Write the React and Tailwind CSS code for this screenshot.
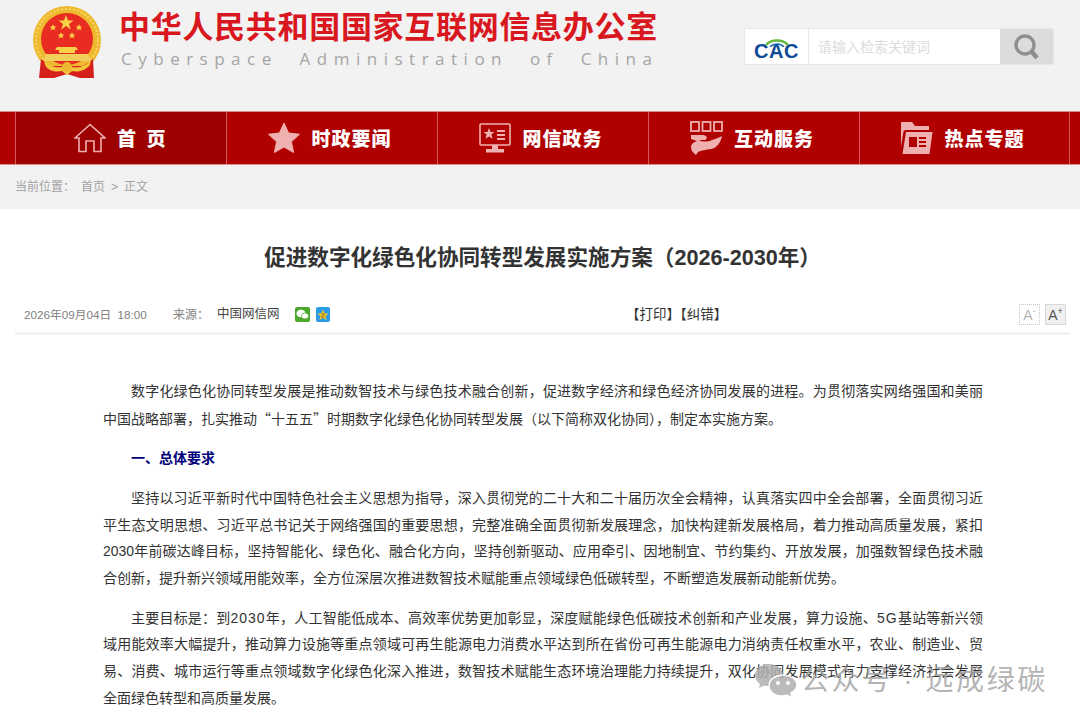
const sans = "font-['Liberation_Sans','Noto_Sans_CJK_SC',sans-serif]"

function Emblem() {
  return (
    <svg width="72" height="76" viewBox="0 0 72 76" className="shrink-0">
      <circle cx="35" cy="34" r="34" fill="#eeb92e" />
      <circle cx="35" cy="34" r="31" fill="none" stroke="#f8d763" strokeWidth="2" strokeDasharray="2 2" />
      <circle cx="35" cy="33" r="26" fill="#e92c22" />
      <polygon points="34,9 36,14.5 41.5,14.5 37,18 38.7,23.5 34,20 29.3,23.5 31,18 26.5,14.5 32,14.5" fill="#f7d34a" />
      <polygon points="21,18 22,20.5 24.5,20.5 22.5,22 23.3,24.5 21,23 18.7,24.5 19.5,22 17.5,20.5 20,20.5" fill="#f7d34a" />
      <polygon points="47,18 48,20.5 50.5,20.5 48.5,22 49.3,24.5 47,23 44.7,24.5 45.5,22 43.5,20.5 46,20.5" fill="#f7d34a" />
      <polygon points="29,26 30,28.5 32.5,28.5 30.5,30 31.3,32.5 29,31 26.7,32.5 27.5,30 25.5,28.5 28,28.5" fill="#f7d34a" />
      <polygon points="40,26 41,28.5 43.5,28.5 41.5,30 42.3,32.5 40,31 37.7,32.5 38.5,30 36.5,28.5 39,28.5" fill="#f7d34a" />
      <path d="M25 41 L44 41 L46 44 L43 44 L43 47 L27 47 L27 44 L23 44 Z" fill="#f7d34a" />
      <path d="M14 48 L56 48 L59 55 L11 55 Z" fill="#f1cf5b" />
      <path d="M9 53 L19 60 L51 60 L61 53 L62 72 L48 72 L35 68 L22 72 L7 72 Z" fill="#d6201c" />
      <path d="M12 53 C 18 63 28 62 35 60 C 43 62 53 63 59 53 L 58 59 C 52 66 44 66 40 65 L 35 69 L 30 65 C 25 66 17 66 13 59 Z" fill="#f2c53a" />
      <circle cx="35" cy="61" r="5" fill="#eeb92e" />
    </svg>
  )
}

function CacLogo() {
  return (
    <div className="relative w-[64px] h-full flex items-end justify-center pb-[2px] border-r border-[#e6e6e6] bg-white shrink-0">
      <svg width="26" height="9" viewBox="0 0 26 9" className="absolute left-[19px] top-[9px]">
        <path d="M2 7 C 7 1 19 1 24 7" fill="none" stroke="#63b93f" strokeWidth="2.4" />
        <path d="M6 9 C 10 5 16 5 20 9" fill="none" stroke="#1b6db3" strokeWidth="1.6" />
      </svg>
      <span className="font-['Liberation_Sans',sans-serif] font-bold text-[20px] leading-[22px] tracking-[0.5px] text-[#0f4a96]">CAC</span>
    </div>
  )
}

function Header() {
  return (
    <header className="h-[111px] bg-[#f2f2f2] flex items-start">
      <div className="pl-[32px] pt-[6px] pr-[15px]"><Emblem /></div>
      <div className="w-[540px] pt-[10px]">
        <div className={`${sans} font-bold text-[31px] leading-[36px] tracking-[0.7px] text-[#d9171e] whitespace-nowrap`}>中华人民共和国国家互联网信息办公室</div>
        <div className="font-['Open_Sans',sans-serif] text-[17px] leading-[24px] tracking-[6.5px] ml-[2px] mt-[1px] text-[#a5a5a5] whitespace-pre">Cyberspace  Administration  of  China</div>
      </div>
      <div className="ml-[85px] mt-[28px] w-[310px] h-[37px] flex rounded-[2px] border border-[#e6e6e6] bg-white overflow-hidden">
        <CacLogo />
        <div className={`${sans} flex-1 pl-[9px] text-[14px] leading-[37px] text-[#dcdcdc]`}>请输入检索关键词</div>
        <div className="w-[53px] bg-[#dcdcdc] flex items-center justify-center">
          <svg width="30" height="28" viewBox="0 0 30 28">
            <circle cx="13" cy="12" r="9" fill="none" stroke="#8f8f8f" strokeWidth="3.4" />
            <path d="M20 19 L25 25" stroke="#8f8f8f" strokeWidth="4.5" />
          </svg>
        </div>
      </div>
    </header>
  )
}

const pink = '#efb0b0'

function HomeIcon() {
  return (
    <svg width="32" height="30" viewBox="0 0 32 30" fill="none" stroke={pink} strokeWidth="1.6">
      <path d="M1 15 L16 1.5 L31 15 L27 15 L27 28.5 L20 28.5 L20 18 L12 18 L12 28.5 L5 28.5 L5 15 Z" />
    </svg>
  )
}

function StarIcon() {
  return (
    <svg width="32" height="32" viewBox="0 0 32 32" fill={pink}>
      <path d="M16 1 L20.6 11 L31.5 12.3 L23.4 19.7 L25.6 30.5 L16 25 L6.4 30.5 L8.6 19.7 L0.5 12.3 L11.4 11 Z" stroke={pink} strokeLinejoin="round" />
    </svg>
  )
}

function MonitorIcon() {
  return (
    <svg width="32" height="30" viewBox="0 0 32 30">
      <rect x="1" y="1" width="30" height="21" rx="1" fill="none" stroke={pink} strokeWidth="1.6" />
      <polygon points="10,5 11.6,9 15.5,9 12.4,11.6 13.6,15.8 10,13.4 6.4,15.8 7.6,11.6 4.5,9 8.4,9" fill={pink} />
      <path d="M18 8 H26 M18 12 H26 M18 16 H26" stroke={pink} strokeWidth="1.8" />
      <path d="M13 22 H19 V26 H25 V29.5 H7 V26 H13 Z" fill={pink} />
    </svg>
  )
}

function HandIcon() {
  return (
    <svg width="33" height="34" viewBox="0 0 33 34">
      <g fill="none" stroke={pink} strokeWidth="1.8">
        <rect x="1" y="1" width="8" height="9" />
        <rect x="12.5" y="1" width="8" height="9" />
        <rect x="24" y="1" width="8" height="9" />
      </g>
      <path d="M1 14 H13 C 17 14 18 18 15 19 H9 C 12 21 18 21 22 19 C 26 18 30 16 32 15 C 31 21 27 27 21 28 C 16 29 12 29 8 31 L6 34 C 3 32 1 29 1 26 C 1 23 4 21 7 20 L1 18 Z" fill={pink} />
    </svg>
  )
}

function FolderIcon() {
  return (
    <svg width="33" height="34" viewBox="0 0 33 34" fill={pink}>
      <path d="M1 1 H12 L15 5 H29 V9 H6 C 4 9 3.4 10 3.2 12 L1 26 Z" />
      <path d="M6 11 H32.5 L29.5 33 H2.5 Z" />
      <rect x="9" y="16" width="8" height="10" fill="#b00000" />
      <path d="M19 17 H26 M19 21 H26 M19 25 H26" stroke="#b00000" strokeWidth="2" />
    </svg>
  )
}

const navItems = [
  { label: '首 页', icon: <HomeIcon />, active: true },
  { label: '时政要闻', icon: <StarIcon /> },
  { label: '网信政务', icon: <MonitorIcon /> },
  { label: '互动服务', icon: <HandIcon /> },
  { label: '热点专题', icon: <FolderIcon /> },
]

function Nav() {
  return (
    <nav className="h-[54px] bg-[#b00000] border-y border-[#d98a8a] pl-[15px] flex">
      {navItems.map((item) => (
        <div
          key={item.label}
          className={`w-[211px] flex items-center justify-center gap-[11px] border-l border-[#d4595c] last:border-r ${item.active ? 'bg-[#9c0000]' : 'pr-[4px]'}`}
        >
          {item.icon}
          <span className={`${sans} ${item.active ? 'tracking-[2.5px]' : 'tracking-[1px]'} font-black text-[19px] pt-[4px] text-white whitespace-pre`}>{item.label}</span>
        </div>
      ))}
    </nav>
  )
}

function Breadcrumb() {
  return (
    <div className={`${sans} h-[44px] bg-[#f2f2f2] pl-[15px] flex items-center text-[12px] text-[#a3a3a3]`}>
      <span className="w-[66px]">当前位置：</span>
      <span>首页</span>
      <span className="mx-[6px]">&gt;</span>
      <span>正文</span>
    </div>
  )
}

function WechatIcon() {
  return (
    <div className="w-[15px] h-[15px] rounded-[2px] bg-[#4aa82b] flex items-center justify-center">
      <svg width="13" height="11" viewBox="0 0 13 11" fill="#fff">
        <ellipse cx="5" cy="4.5" rx="4.5" ry="3.8" />
        <ellipse cx="9" cy="7" rx="3.6" ry="3" stroke="#4aa82b" strokeWidth="0.7" />
      </svg>
    </div>
  )
}

function QzoneIcon() {
  return (
    <div className="w-[14px] h-[15px] rounded-[2px] bg-[#2a9be8] flex items-center justify-center">
      <svg width="12" height="12" viewBox="0 0 12 12">
        <polygon points="6,0.5 7.6,4.2 11.6,4.5 8.6,7.1 9.6,11 6,8.9 2.4,11 3.4,7.1 0.4,4.5 4.4,4.2" fill="#f4c430" />
        <path d="M4.3 5 H7.7 L4.3 8 H7.7" fill="none" stroke="#8a6a10" strokeWidth="0.9" />
      </svg>
    </div>
  )
}

function MetaRow() {
  return (
    <div className={`${sans} ml-[15px] mr-[10px] mt-[26px] h-[35px] pb-[3px] pl-[9px] pr-[4px] flex items-center border-b-[3px] border-[#f2f2f2] text-[12px]`}>
      <div className="w-[602px] flex items-center">
        <span className="text-[#808080] text-[11.7px] w-[149px] whitespace-pre">2026年09月04日  18:00</span>
        <span className="text-[#808080] w-[44px]">来源：</span>
        <span className="text-[#444] text-[12.5px] w-[78px]">中国网信网</span>
        <div className="flex gap-[6px]"><WechatIcon /><QzoneIcon /></div>
      </div>
      <span className="text-[#333] text-[13.5px] pt-[1px]">【打印】【纠错】</span>
      <div className="ml-auto flex gap-[5px]">
        <div className="w-[21px] h-[21px] border border-dotted border-[#c8c8c8] flex items-start justify-center font-['Liberation_Sans',sans-serif] text-[14px] leading-[20px] text-[#b5b5b5]">A<span className="text-[9px] leading-[12px]">-</span></div>
        <div className="w-[21px] h-[21px] border border-[#d8d8d8] bg-[#f0f0f0] flex items-start justify-center font-['Liberation_Sans',sans-serif] text-[14px] leading-[20px] text-[#555]">A<span className="text-[9px] leading-[12px]">+</span></div>
      </div>
    </div>
  )
}

const cjkQuote = "font-['Noto_Sans_CJK_SC',sans-serif]"

function Article() {
  return (
    <main className="bg-white h-[512px] overflow-hidden">
      <h1 className={`${sans} pt-[33px] pl-[5px] text-center font-bold text-[21.6px] leading-[32px] text-[#333]`}>促进数字化绿色化协同转型发展实施方案（2026-2030年）</h1>
      <MetaRow />
      <div className={`${sans} mx-[103px] w-[880px] mt-[43px] text-[14px] leading-[26.67px] text-[#333]`}>
        <p className="indent-[28px] text-justify mb-[13px]">
          数字化绿色化协同转型发展是推动数智技术与绿色技术融合创新，促进数字经济和绿色经济协同发展的进程。为贯彻落实网络强国和美丽中国战略部署，扎实推动<span className={cjkQuote}>“</span>十五五<span className={cjkQuote}>”</span>时期数字化绿色化协同转型发展（以下简称双化协同），制定本实施方案。
        </p>
        <p className="indent-[28px] mb-[13px] font-bold text-[#00007a]">一、总体要求</p>
        <p className="indent-[28px] text-justify mb-[13px]">
          坚持以习近平新时代中国特色社会主义思想为指导，深入贯彻党的二十大和二十届历次全会精神，认真落实四中全会部署，全面贯彻习近平生态文明思想、习近平总书记关于网络强国的重要思想，完整准确全面贯彻新发展理念，加快构建新发展格局，着力推动高质量发展，紧扣2030年前碳达峰目标，坚持智能化、绿色化、融合化方向，坚持创新驱动、应用牵引、因地制宜、节约集约、开放发展，加强数智绿色技术融合创新，提升新兴领域用能效率，全方位深层次推进数智技术赋能重点领域绿色低碳转型，不断塑造发展新动能新优势。
        </p>
        <p className="indent-[28px] text-justify mb-[13px]">
          主要目标是：到<span className="tracking-[1px]">2030</span>年，人工智能低成本、高效率优势更加彰显，深度赋能绿色低碳技术创新和产业发展，算力设施、<span className="tracking-[1px]">5G</span>基站等新兴领域用能效率大幅提升，推动算力设施等重点领域可再生能源电力消费水平达到所在省份可再生能源电力消纳责任权重水平，农业、制造业、贸易、消费、城市运行等重点领域数字化绿色化深入推进，数智技术赋能生态环境治理能力持续提升，双化协同发展模式有力支撑经济社会发展全面绿色转型和高质量发展。
        </p>
      </div>
    </main>
  )
}

function Watermark() {
  return (
    <div className="absolute left-[754px] top-[660px] flex items-center gap-[3px] opacity-85">
      <svg width="44" height="36" viewBox="0 0 44 36" fill="#b0b0b0">
        <path d="M15 1 C 7 1 1 6 1 12 C 1 16 3 19 6 21 L5 25 L10 22.5 C 11 23 13 23 15 23 C 23 23 29 18 29 12 C 29 6 23 1 15 1 Z" />
        <path d="M29 12 C 22 12 15 16 15 23 C 15 29 21 33 28 33 C 30 33 31 33 33 32 L38 35 L37 30 C 41 28 43 25 43 22 C 43 16 36 12 29 12 Z" stroke="#fff" strokeWidth="1.5" />
        <circle cx="24" cy="20" r="2" fill="#fff" />
        <circle cx="34" cy="20" r="2" fill="#fff" />
      </svg>
      <span className={`${sans} text-[28px] tracking-[2.6px] text-[#a8a8a8] whitespace-pre`}>公众号 · 远成绿碳</span>
    </div>
  )
}

export default function App() {
  return (
    <div className="relative w-[1080px] h-[721px] overflow-hidden bg-white">
      <Header />
      <Nav />
      <Breadcrumb />
      <Article />
      <Watermark />
    </div>
  )
}
